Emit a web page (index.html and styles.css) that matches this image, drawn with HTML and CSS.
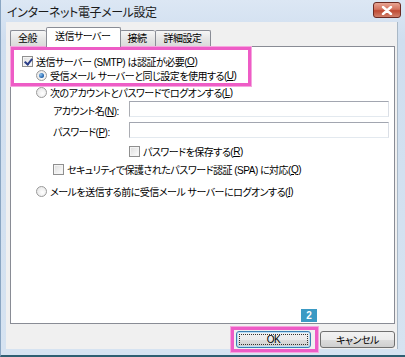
FILE: index.html
```html
<!DOCTYPE html>
<html lang="ja">
<head>
  <meta charset="UTF-8">
  <title>インターネット電子メール設定</title>
  <link rel="stylesheet" href="styles.css">
</head>
<body>
  <div class="window">
    <div class="titlebar">
      <span class="title">インターネット電子メール設定</span>
      <button class="close" aria-label="閉じる">
        <svg width="12" height="9" viewBox="0 0 12 9"><path d="M2 1 L10 8 M10 1 L2 8" stroke="#fff" stroke-width="2.4" stroke-linecap="round"/></svg>
      </button>
    </div>

    <div class="client">
      <div class="tabs">
        <div class="tab">全般</div>
        <div class="tab active">送信サーバー</div>
        <div class="tab">接続</div>
        <div class="tab">詳細設定</div>
      </div>

      <div class="panel">
        <label class="row r-auth"><span class="check checked"></span>送信サーバー (SMTP) は認証が必要(<u>O</u>)</label>
        <label class="row r-same"><span class="radio checked"></span>受信メール サーバーと同じ設定を使用する(<u>U</u>)</label>
        <label class="row r-logon"><span class="radio"></span>次のアカウントとパスワードでログオンする(<u>L</u>)</label>
        <div class="field r-account">
          <span class="field-label">アカウント名(<u>N</u>):</span>
          <input class="textbox" type="text">
        </div>
        <div class="field r-password">
          <span class="field-label">パスワード(<u>P</u>):</span>
          <input class="textbox" type="password">
        </div>
        <label class="row r-save"><span class="check"></span>パスワードを保存する(<u>R</u>)</label>
        <label class="row r-spa"><span class="check"></span>セキュリティで保護されたパスワード認証 (SPA) に対応(<u>Q</u>)</label>
        <label class="row r-before"><span class="radio"></span>メールを送信する前に受信メール サーバーにログオンする(<u>I</u>)</label>
      </div>

      <div class="buttons">
        <button class="btn default"><span class="focus">OK</span></button>
        <button class="btn">キャンセル</button>
      </div>
    </div>

    <!-- annotation overlay -->
    <div class="mark mark-auth"></div>
    <div class="mark mark-ok"></div>
    <div class="badge">2</div>
  </div>
</body>
</html>
```

FILE: styles.css
```css
:root {
  --frame: #d3e1f0;
  --face: #f0f0f0;
  --line: #898c95;
  --mark: #ee5cc6;
  --badge: #3b9ac4;
}

body {
  margin: 0;
  font-family: "Liberation Sans", "Noto Sans CJK JP", sans-serif;
  font-size: 10px;
  letter-spacing: -0.5px;
  font-feature-settings: "palt";
  color: #000;
}

.window {
  position: relative;
  width: 405px;
  height: 357px;
  box-sizing: border-box;
  background: linear-gradient(#dce7f4, #cfdeef 40px, #d6e3f1);
  border-left: 1px solid #8aa6c3;
  border-bottom: 2px solid #2f5f72;
  display: flex;
  flex-direction: column;
  overflow: hidden;
}

.titlebar {
  height: 22px;
  display: flex;
  align-items: center;
  justify-content: space-between;
  padding: 0 4px 0 6px;
}

.title {
  font-size: 12px;
  letter-spacing: -0.4px;
  color: #1a1a1a;
}

.close {
  width: 28px;
  height: 16px;
  margin-top: -2px;
  padding: 0;
  border: 1px solid #6b2a22;
  border-radius: 3px;
  background: linear-gradient(#e8a493, #d3735f 45%, #bf4a33 55%, #d0806b);
  display: flex;
  align-items: center;
  justify-content: center;
}

.client {
  margin: 0 7px 0 5px;
  height: 327px;
  background: var(--face);
  padding: 5px 0 0 4px;
  box-sizing: border-box;
  border-right: 1px solid #a9b8c6;
}

.tabs {
  display: flex;
  align-items: flex-end;
  height: 20px;
  margin-bottom: -1px;
  position: relative;
  z-index: 1;
}

.tab {
  height: 16px;
  margin-bottom: 1px;
  padding: 0 9px 0 7px;
  box-sizing: border-box;
  border: 1px solid var(--line);
  border-bottom: none;
  border-right: none;
  border-radius: 2px 2px 0 0;
  background: linear-gradient(#f6f6f6, #e6e6e6 50%, #dadada);
  line-height: 15px;
}

.tab:last-child {
  border-right: 1px solid var(--line);
}

.tab.active {
  height: 20px;
  margin: 0 -1px 0 0;
  padding: 0 10px 0 8px;
  background: #fff;
  border-right: 1px solid var(--line);
  line-height: 18px;
  position: relative;
}

.tab.active + .tab {
  border-left: none;
}

.panel {
  width: 385px;
  height: 278px;
  box-sizing: border-box;
  background: #fff;
  border: 1px solid var(--line);
  padding-top: 7px;
}

.row {
  display: flex;
  align-items: center;
  height: 14px;
  white-space: nowrap;
}

.row .check,
.row .radio {
  margin-right: 3px;
}

.r-auth { padding-left: 11px; }
.r-same { padding-left: 25px; }
.r-logon { padding-left: 25px; margin-top: 3px; }
.r-save { padding-left: 118px; margin-top: 5px; }
.r-spa { padding-left: 42px; margin-top: 4px; }
.r-before { padding-left: 25px; margin-top: 8px; }

.field {
  display: flex;
  align-items: center;
  padding-left: 42px;
  padding-right: 5px;
  white-space: nowrap;
}

.r-account { margin-top: 1px; }
.r-password { margin-top: 3px; }

.field-label {
  width: 76px;
  flex: none;
  padding-top: 3px;
}

.textbox {
  flex: 1;
  height: 16px;
  margin: 0;
  padding: 0;
  box-sizing: border-box;
  border: 1px solid #abadb3;
  border-top-color: #a2a6b0;
  border-right-color: #dbdfe6;
  border-bottom-color: #e3e9ef;
  outline: none;
}

.check {
  width: 11px;
  height: 11px;
  flex: none;
  box-sizing: border-box;
  border: 1px solid #8f8f8f;
  background: linear-gradient(135deg, #dcdcdc, #f4f4f4 70%, #fff);
  box-shadow: inset 0 0 0 1px #f4f4f4;
  position: relative;
}

.check.checked::after {
  content: "";
  position: absolute;
  left: 3px;
  top: 0;
  width: 3px;
  height: 6px;
  border: solid #2b3e88;
  border-width: 0 2px 2px 0;
  transform: rotate(40deg);
}

.radio {
  width: 11px;
  height: 11px;
  flex: none;
  box-sizing: border-box;
  border: 1px solid #9a9a9a;
  border-radius: 50%;
  background: radial-gradient(circle at 60% 60%, #fff, #e0e0e0);
  position: relative;
}

.radio.checked::after {
  content: "";
  position: absolute;
  left: 2px;
  top: 2px;
  width: 5px;
  height: 5px;
  border-radius: 50%;
  background: radial-gradient(circle at 35% 35%, #8fc3f0, #1c5ea8 70%);
}

.buttons {
  display: flex;
  justify-content: flex-end;
  gap: 9px;
  margin-top: 7px;
  padding-right: 2px;
}

.btn {
  width: 75px;
  height: 17px;
  padding: 0;
  box-sizing: border-box;
  border: 1px solid #707070;
  border-radius: 3px;
  background: linear-gradient(#f2f2f2, #ebebeb 50%, #dddddd 51%, #cfcfcf);
  font: inherit;
  letter-spacing: inherit;
  font-feature-settings: "palt";
  color: #000;
  display: flex;
  align-items: center;
  justify-content: center;
}

.btn.default {
  border-color: #3c7fb1;
  box-shadow: inset 0 0 0 1px #b9e0f7;
}

.btn .focus {
  flex: 1;
  align-self: stretch;
  margin: 2px;
  border: 1px dotted #333;
  display: flex;
  align-items: center;
  justify-content: center;
  line-height: 1;
}

.mark {
  position: absolute;
  box-sizing: border-box;
  border: 3px solid var(--mark);
  box-shadow: 0 0 0 1px #f5a6de;
}

.mark-auth {
  left: 10px;
  top: 47px;
  width: 240px;
  height: 39px;
}

.mark-ok {
  left: 230px;
  top: 327px;
  width: 87px;
  height: 25px;
}

.badge {
  position: absolute;
  left: 300px;
  top: 309px;
  width: 16px;
  height: 13px;
  background: var(--badge);
  color: #fff;
  font-family: "Liberation Sans", sans-serif;
  font-size: 10px;
  font-weight: bold;
  letter-spacing: 0;
  line-height: 13px;
  text-align: center;
}
```
